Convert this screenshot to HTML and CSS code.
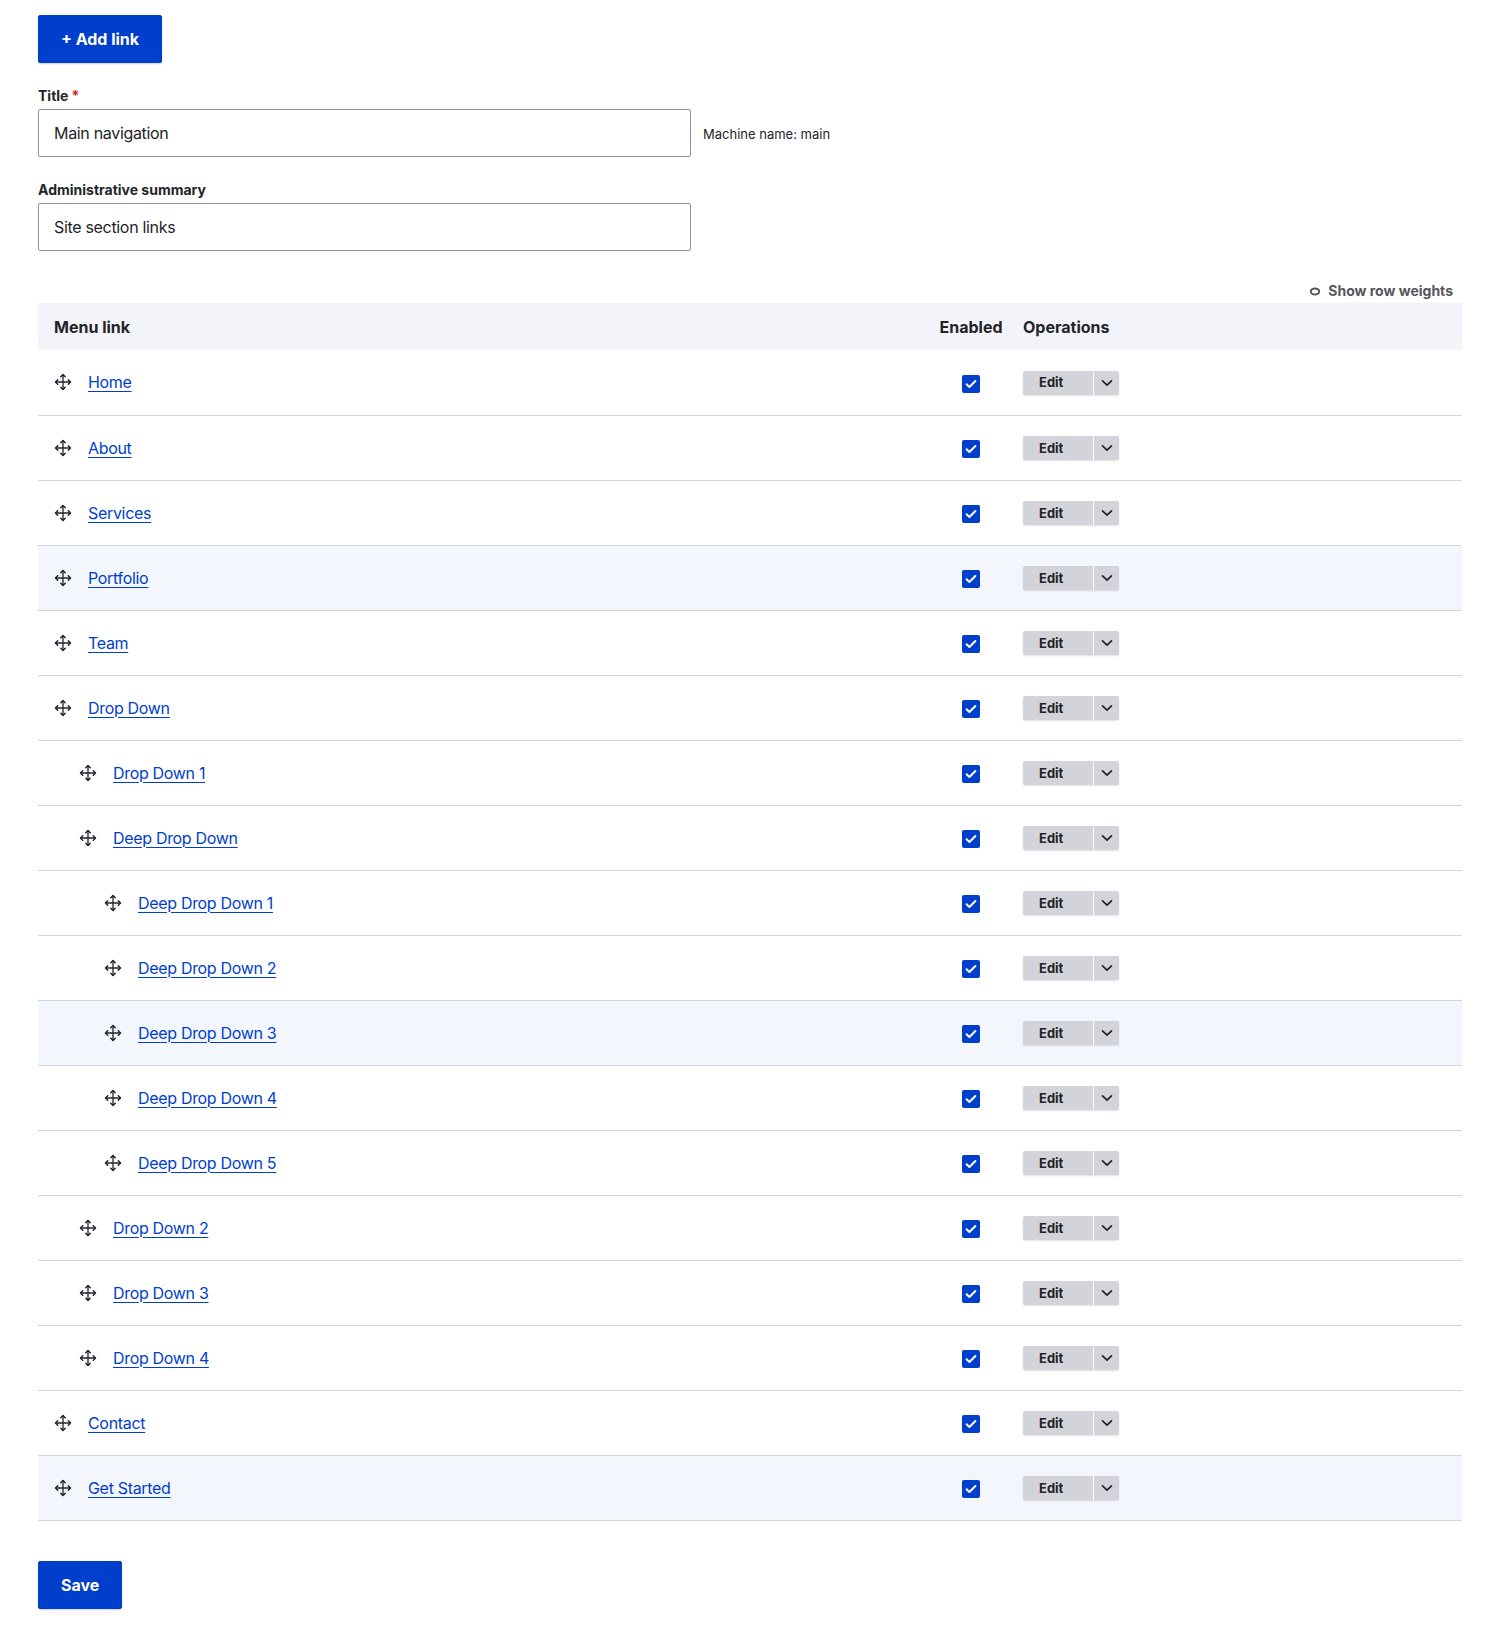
FILE: index.html
```html
<!DOCTYPE html>
<html lang="en">
<head>
<meta charset="utf-8">
<title>Edit menu</title>
<link rel="stylesheet" href="styles.css">
</head>
<body>
<svg width="0" height="0" class="defs" aria-hidden="true">
  <defs>
    <symbol id="drag" viewBox="0 0 18 18">
      <path d="M9 1.5v15M1.5 9h15" fill="none" stroke="currentColor" stroke-width="1.3"/>
      <path d="M6.8 3.7L9 1.5l2.2 2.2M6.8 14.3L9 16.5l2.2-2.2M3.7 6.8L1.5 9l2.2 2.2M14.3 6.8L16.5 9l-2.2 2.2" fill="none" stroke="currentColor" stroke-width="1.5" stroke-linecap="round" stroke-linejoin="round"/>
    </symbol>
    <symbol id="check" viewBox="0 0 18 18">
      <rect width="18" height="18" rx="2" fill="#003ecc"/>
      <path d="M4.6 9.3l2.8 2.7 6-6" fill="none" stroke="#fff" stroke-width="2" stroke-linecap="round" stroke-linejoin="round"/>
    </symbol>
    <symbol id="chev" viewBox="0 0 12 8">
      <path d="M1.5 1.8L6 6.2l4.5-4.4" fill="none" stroke="currentColor" stroke-width="1.7" stroke-linecap="round" stroke-linejoin="round"/>
    </symbol>
  </defs>
</svg>
<div class="page">
  <div class="actions-top">
    <a class="button" href="#">+ Add link</a>
  </div>

  <div class="form-item">
    <label class="label">Title<span class="req">*</span></label>
    <div class="inline">
      <input class="text" type="text" value="Main navigation">
      <span class="machine">Machine name: main</span>
    </div>
  </div>

  <div class="form-item">
    <label class="label">Administrative summary</label>
    <input class="text" type="text" value="Site section links">
  </div>

  <div class="weights">
    <button class="weights-toggle" type="button">
      <svg class="eye" viewBox="0 0 12 9" width="12" height="9"><ellipse cx="6" cy="4.5" rx="4.2" ry="3" fill="none" stroke="currentColor" stroke-width="2"/></svg>
      Show row weights
    </button>
  </div>

  <table class="menu-table">
    <colgroup><col class="c1"><col class="c2"><col class="c3"></colgroup>
    <thead>
      <tr><th>Menu link</th><th class="center">Enabled</th><th>Operations</th></tr>
    </thead>
    <tbody>
      <tr><td><div class="cell l1"><svg class="drag"><use href="#drag"/></svg><a href="#">Home</a></div></td><td class="center"><svg class="cb"><use href="#check"/></svg></td><td><div class="dropbutton"><span class="db-main">Edit</span><span class="db-toggle"><svg><use href="#chev"/></svg></span></div></td></tr>
      <tr><td><div class="cell l1"><svg class="drag"><use href="#drag"/></svg><a href="#">About</a></div></td><td class="center"><svg class="cb"><use href="#check"/></svg></td><td><div class="dropbutton"><span class="db-main">Edit</span><span class="db-toggle"><svg><use href="#chev"/></svg></span></div></td></tr>
      <tr><td><div class="cell l1"><svg class="drag"><use href="#drag"/></svg><a href="#">Services</a></div></td><td class="center"><svg class="cb"><use href="#check"/></svg></td><td><div class="dropbutton"><span class="db-main">Edit</span><span class="db-toggle"><svg><use href="#chev"/></svg></span></div></td></tr>
      <tr class="hl"><td><div class="cell l1"><svg class="drag"><use href="#drag"/></svg><a href="#">Portfolio</a></div></td><td class="center"><svg class="cb"><use href="#check"/></svg></td><td><div class="dropbutton"><span class="db-main">Edit</span><span class="db-toggle"><svg><use href="#chev"/></svg></span></div></td></tr>
      <tr><td><div class="cell l1"><svg class="drag"><use href="#drag"/></svg><a href="#">Team</a></div></td><td class="center"><svg class="cb"><use href="#check"/></svg></td><td><div class="dropbutton"><span class="db-main">Edit</span><span class="db-toggle"><svg><use href="#chev"/></svg></span></div></td></tr>
      <tr><td><div class="cell l1"><svg class="drag"><use href="#drag"/></svg><a href="#">Drop Down</a></div></td><td class="center"><svg class="cb"><use href="#check"/></svg></td><td><div class="dropbutton"><span class="db-main">Edit</span><span class="db-toggle"><svg><use href="#chev"/></svg></span></div></td></tr>
      <tr><td><div class="cell l2"><svg class="drag"><use href="#drag"/></svg><a href="#">Drop Down 1</a></div></td><td class="center"><svg class="cb"><use href="#check"/></svg></td><td><div class="dropbutton"><span class="db-main">Edit</span><span class="db-toggle"><svg><use href="#chev"/></svg></span></div></td></tr>
      <tr><td><div class="cell l2"><svg class="drag"><use href="#drag"/></svg><a href="#">Deep Drop Down</a></div></td><td class="center"><svg class="cb"><use href="#check"/></svg></td><td><div class="dropbutton"><span class="db-main">Edit</span><span class="db-toggle"><svg><use href="#chev"/></svg></span></div></td></tr>
      <tr><td><div class="cell l3"><svg class="drag"><use href="#drag"/></svg><a href="#">Deep Drop Down 1</a></div></td><td class="center"><svg class="cb"><use href="#check"/></svg></td><td><div class="dropbutton"><span class="db-main">Edit</span><span class="db-toggle"><svg><use href="#chev"/></svg></span></div></td></tr>
      <tr><td><div class="cell l3"><svg class="drag"><use href="#drag"/></svg><a href="#">Deep Drop Down 2</a></div></td><td class="center"><svg class="cb"><use href="#check"/></svg></td><td><div class="dropbutton"><span class="db-main">Edit</span><span class="db-toggle"><svg><use href="#chev"/></svg></span></div></td></tr>
      <tr class="hl"><td><div class="cell l3"><svg class="drag"><use href="#drag"/></svg><a href="#">Deep Drop Down 3</a></div></td><td class="center"><svg class="cb"><use href="#check"/></svg></td><td><div class="dropbutton"><span class="db-main">Edit</span><span class="db-toggle"><svg><use href="#chev"/></svg></span></div></td></tr>
      <tr><td><div class="cell l3"><svg class="drag"><use href="#drag"/></svg><a href="#">Deep Drop Down 4</a></div></td><td class="center"><svg class="cb"><use href="#check"/></svg></td><td><div class="dropbutton"><span class="db-main">Edit</span><span class="db-toggle"><svg><use href="#chev"/></svg></span></div></td></tr>
      <tr><td><div class="cell l3"><svg class="drag"><use href="#drag"/></svg><a href="#">Deep Drop Down 5</a></div></td><td class="center"><svg class="cb"><use href="#check"/></svg></td><td><div class="dropbutton"><span class="db-main">Edit</span><span class="db-toggle"><svg><use href="#chev"/></svg></span></div></td></tr>
      <tr><td><div class="cell l2"><svg class="drag"><use href="#drag"/></svg><a href="#">Drop Down 2</a></div></td><td class="center"><svg class="cb"><use href="#check"/></svg></td><td><div class="dropbutton"><span class="db-main">Edit</span><span class="db-toggle"><svg><use href="#chev"/></svg></span></div></td></tr>
      <tr><td><div class="cell l2"><svg class="drag"><use href="#drag"/></svg><a href="#">Drop Down 3</a></div></td><td class="center"><svg class="cb"><use href="#check"/></svg></td><td><div class="dropbutton"><span class="db-main">Edit</span><span class="db-toggle"><svg><use href="#chev"/></svg></span></div></td></tr>
      <tr><td><div class="cell l2"><svg class="drag"><use href="#drag"/></svg><a href="#">Drop Down 4</a></div></td><td class="center"><svg class="cb"><use href="#check"/></svg></td><td><div class="dropbutton"><span class="db-main">Edit</span><span class="db-toggle"><svg><use href="#chev"/></svg></span></div></td></tr>
      <tr><td><div class="cell l1"><svg class="drag"><use href="#drag"/></svg><a href="#">Contact</a></div></td><td class="center"><svg class="cb"><use href="#check"/></svg></td><td><div class="dropbutton"><span class="db-main">Edit</span><span class="db-toggle"><svg><use href="#chev"/></svg></span></div></td></tr>
      <tr class="hl"><td><div class="cell l1"><svg class="drag"><use href="#drag"/></svg><a href="#">Get Started</a></div></td><td class="center"><svg class="cb"><use href="#check"/></svg></td><td><div class="dropbutton"><span class="db-main">Edit</span><span class="db-toggle"><svg><use href="#chev"/></svg></span></div></td></tr>
    </tbody>
  </table>

  <div class="actions-bottom">
    <a class="button" href="#">Save</a>
  </div>
</div>
</body>
</html>
```

FILE: styles.css
```css
* { box-sizing: border-box; }

html, body {
  margin: 0;
  padding: 0;
  background: #fff;
}

body {
  font-family: Inter, "Noto Sans", "Liberation Sans", sans-serif;
  color: #232429;
  font-size: 16px;
  line-height: 1.5;
}

.defs {
  position: absolute;
  width: 0;
  height: 0;
}

.page {
  padding: 15px 24px 40px 38px;
}

.page > * {
  width: 1424px;
}

.button {
  display: inline-block;
  padding: 15px 22px;
  background: #003ecc;
  color: #fff;
  font-weight: 700;
  font-size: 16px;
  line-height: 16px;
  border: 1px solid #003ecc;
  border-radius: 2px;
  text-decoration: none;
  box-shadow: 0 1px 2px rgba(0, 0, 0, 0.2);
}

.actions-top {
  margin-bottom: 24px;
}

.form-item {
  margin-bottom: 24px;
}

.label {
  display: block;
  font-size: 14px;
  font-weight: 700;
  line-height: 18px;
  margin-bottom: 4px;
}

.req {
  color: #dc2323;
  margin-left: 3px;
}

.inline {
  display: flex;
  align-items: center;
  gap: 12px;
}

.text {
  display: block;
  width: 653px;
  height: 48px;
  padding: 0 15px;
  border: 1px solid #919297;
  border-radius: 2px;
  font-family: inherit;
  font-size: 16px;
  letter-spacing: -0.02em;
  color: #232429;
  background: #fff;
}

.machine {
  font-size: 13px;
  color: #232429;
  margin-top: 3px;
}

.weights {
  margin-top: 31px;
  display: flex;
  justify-content: flex-end;
  padding-right: 9px;
  margin-bottom: 3px;
}

.weights-toggle {
  display: flex;
  align-items: center;
  gap: 7px;
  padding: 0;
  border: 0;
  background: none;
  font-family: inherit;
  font-size: 14px;
  font-weight: 700;
  line-height: 18px;
  color: #55565b;
}

.eye {
  display: block;
}

.menu-table {
  border-collapse: collapse;
  table-layout: fixed;
}

.c1 { width: 897px; }
.c2 { width: 72px; }
.c3 { width: 455px; }

.menu-table th {
  background: #f3f4f9;
  height: 47px;
  padding: 0 16px;
  text-align: left;
  font-size: 16px;
  font-weight: 700;
  color: #232429;
}

.menu-table th.center,
.menu-table td.center {
  text-align: center;
  padding: 0;
}

.menu-table td {
  height: 65px;
  padding: 0 16px;
  border-bottom: 1px solid #d3d4d9;
  vertical-align: middle;
}

.menu-table tr.hl td {
  background: #f3f6fd;
}

.cell {
  display: flex;
  align-items: center;
  gap: 16px;
}

.cell.l2 { padding-left: 25px; }
.cell.l3 { padding-left: 50px; }

.drag {
  width: 18px;
  height: 18px;
  color: #222330;
  flex: none;
}

.cell a {
  color: #003ecc;
  letter-spacing: -0.02em;
  text-decoration: underline;
  text-underline-offset: 3px;
  text-decoration-thickness: 1px;
}

.cb {
  display: inline-block;
  width: 18px;
  height: 18px;
  vertical-align: middle;
}

.dropbutton {
  display: inline-flex;
  height: 24px;
  border-radius: 2px;
  background: #d3d4d9;
  box-shadow: 0 1px 2px rgba(0, 0, 0, 0.12);
  vertical-align: middle;
}

.db-main {
  width: 71px;
  display: flex;
  align-items: center;
  justify-content: flex-start;
  padding-left: 16px;
  font-size: 13px;
  font-weight: 700;
  color: #232429;
  border-right: 1px solid #fff;
}

.db-toggle {
  width: 25px;
  display: flex;
  align-items: center;
  justify-content: center;
  color: #222330;
}

.db-toggle svg {
  width: 12px;
  height: 8px;
}

.actions-bottom {
  margin-top: 40px;
}
```
